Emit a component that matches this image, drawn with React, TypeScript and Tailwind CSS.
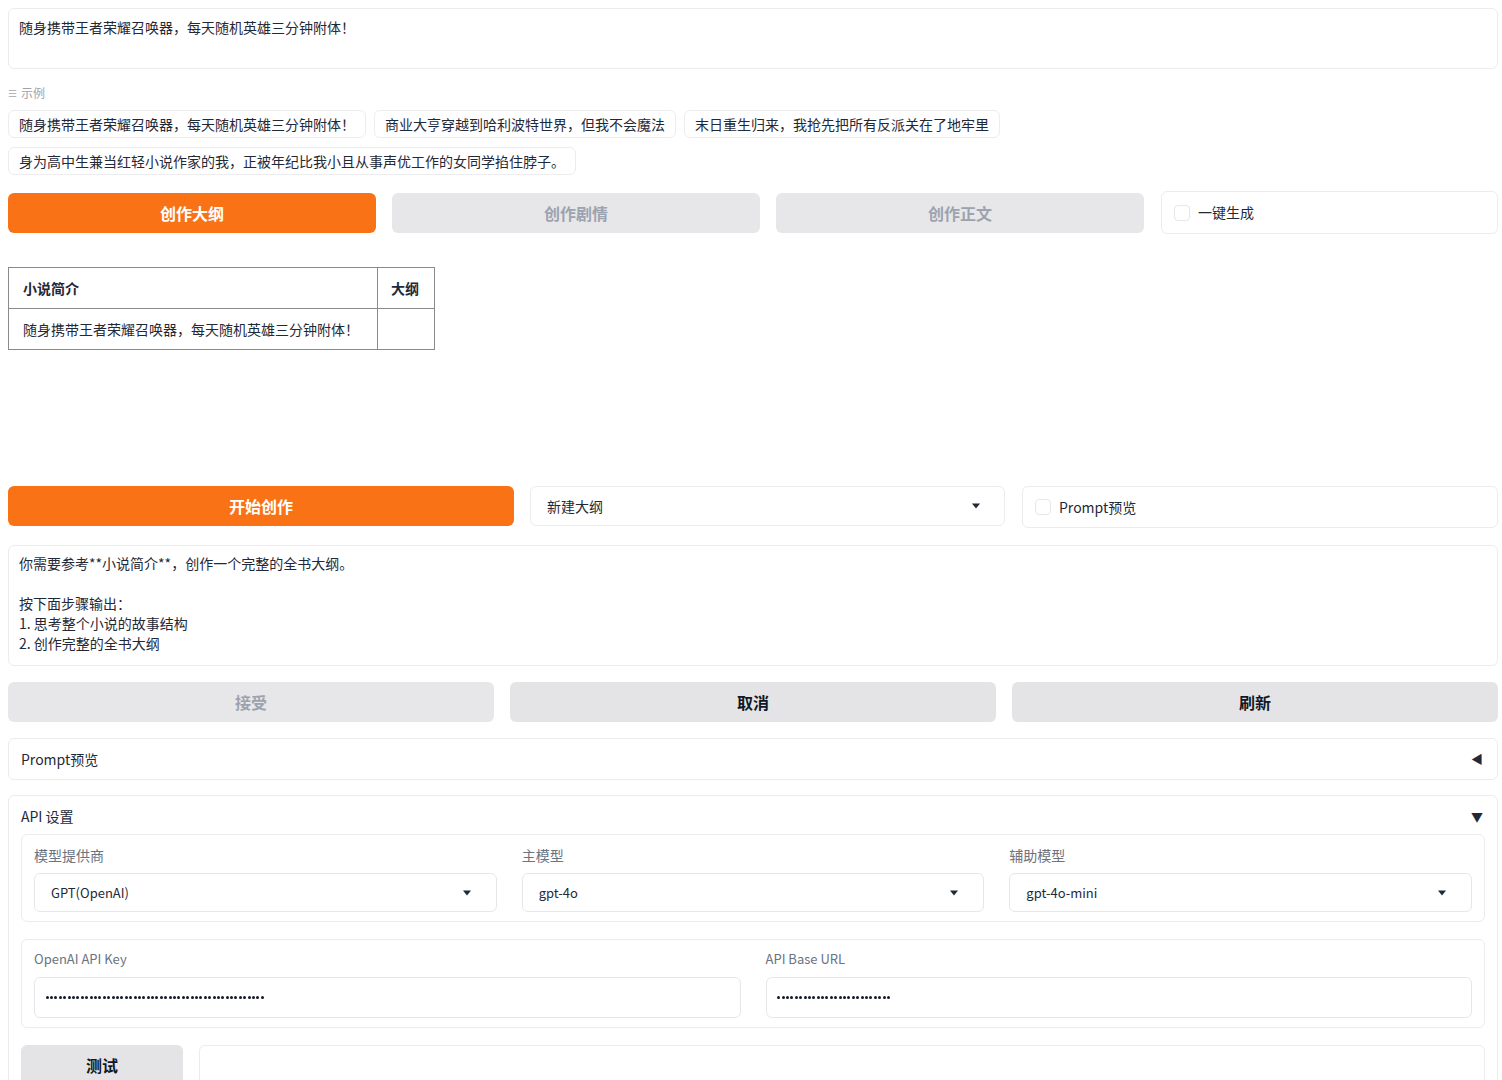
import React from 'react';

const font = { fontFamily: '"Noto Sans CJK SC", "Noto Sans", sans-serif' };

const examples = [
  '随身携带王者荣耀召唤器，每天随机英雄三分钟附体！',
  '商业大亨穿越到哈利波特世界，但我不会魔法',
  '末日重生归来，我抢先把所有反派关在了地牢里',
  '身为高中生兼当红轻小说作家的我，正被年纪比我小且从事声优工作的女同学掐住脖子。',
];

const Caret = () => (
  <svg width="10" height="6" viewBox="0 0 10 6" className="shrink-0">
    <path d="M1 0.5 L9 0.5 L5 5.5 Z" fill="#1f2937" />
  </svg>
);

const CheckBox = () => <span className="w-4 h-4 rounded-[4px] border border-[#e5e7eb] bg-white shrink-0"></span>;

const Select: React.FC<{ value: string; className?: string }> = ({ value, className }) => (
  <div className={`flex items-center justify-between h-[39px] px-4 rounded-[6px] border border-[#e5e7eb] bg-white text-[13px] text-[#1f2937] ${className || ''}`}>
    <span>{value}</span>
    <span className="mr-2"><Caret /></span>
  </div>
);

const Dots: React.FC<{ n: number }> = ({ n }) => (
  <div className="flex items-center h-[41px] px-[10px] rounded-[6px] border border-[#e5e7eb] bg-white">
    <div className="flex">
      {Array.from({ length: n }).map((_, i) => (
        <span key={i} className="w-[4.4px] h-[4.4px] flex items-center justify-center">
          <span className="w-[3px] h-[3px] rounded-full bg-[#111827]"></span>
        </span>
      ))}
    </div>
  </div>
);

export default function App() {
  return (
    <div className="min-h-screen bg-white text-[#1f2937]" style={font}>
      <div className="ml-2 w-[1490px] pt-2 flex flex-col">
        {/* story intro */}
        <div className="h-[61px] rounded-[6px] border border-[#ececee] px-[10px] pt-[8px] text-[14px] leading-5">
          随身携带王者荣耀召唤器，每天随机英雄三分钟附体！
        </div>

        {/* examples */}
        <div className="mt-[16px] flex items-center gap-1 text-[12px] text-[#9ca3af] leading-4">
          <span className="text-[10px] text-[#b4b4bb]">☰</span>
          <span>示例</span>
        </div>
        <div className="mt-[9px] flex flex-wrap gap-x-2 gap-y-[9px] w-[1000px]">
          {examples.map((e) => (
            <div key={e} className="h-[28px] px-[10px] flex items-center rounded-[6px] border border-[#ededf0] bg-white text-[14px] text-[#1f2937]">
              {e}
            </div>
          ))}
        </div>

        {/* action buttons */}
        <div className="mt-[16px] grid grid-cols-[368px_368px_368px_1fr] gap-4 items-center">
          <div className="h-[40px] rounded-[6px] bg-[#f97316] text-white font-bold text-[16px] flex items-center justify-center">创作大纲</div>
          <div className="h-[40px] rounded-[6px] bg-[#e7e7e9] text-[#9ca3af] font-bold text-[16px] flex items-center justify-center">创作剧情</div>
          <div className="h-[40px] rounded-[6px] bg-[#e7e7e9] text-[#9ca3af] font-bold text-[16px] flex items-center justify-center">创作正文</div>
          <div className="ml-[1px] h-[43px] rounded-[6px] border border-[#ececee] flex items-center gap-2 px-3 text-[14px]">
            <CheckBox />
            <span>一键生成</span>
          </div>
        </div>

        {/* table */}
        <div className="mt-[33px] h-[219px]">
          <table className="border-collapse text-[14px]">
            <thead>
              <tr className="h-[41px]">
                <th className="border border-[#8a8a8a] text-left font-bold px-[14px] w-[369px]">小说简介</th>
                <th className="border border-[#8a8a8a] text-left font-bold px-[13px] w-[57px]">大纲</th>
              </tr>
            </thead>
            <tbody>
              <tr className="h-[41px]">
                <td className="border border-[#8a8a8a] px-[14px]">随身携带王者荣耀召唤器，每天随机英雄三分钟附体！</td>
                <td className="border border-[#8a8a8a]"></td>
              </tr>
            </tbody>
          </table>
        </div>

        {/* start row */}
        <div className="grid grid-cols-[506px_475px_1fr] gap-4 items-start">
          <div className="h-[40px] rounded-[6px] bg-[#f97316] text-white font-bold text-[16px] flex items-center justify-center">开始创作</div>
          <div className="h-[40px] rounded-[6px] border border-[#ececee] flex items-center justify-between px-4 text-[14px]">
            <span>新建大纲</span>
            <span className="mr-[7px]"><Caret /></span>
          </div>
          <div className="ml-[1px] h-[42px] rounded-[6px] border border-[#ececee] flex items-center gap-2 px-3 text-[14px]">
            <CheckBox />
            <span>Prompt预览</span>
          </div>
        </div>

        {/* prompt text */}
        <div className="mt-[17px] h-[121px] rounded-[6px] border border-[#ececee] px-[10px] pt-[7px] text-[14px] leading-5">
          <div>你需要参考**小说简介**，创作一个完整的全书大纲。</div>
          <div className="h-5"></div>
          <div>按下面步骤输出：</div>
          <div>1. 思考整个小说的故事结构</div>
          <div>2. 创作完整的全书大纲</div>
        </div>

        {/* accept / cancel / refresh */}
        <div className="mt-4 grid grid-cols-3 gap-4">
          <div className="h-[40px] rounded-[6px] bg-[#e7e7e9] text-[#9ca3af] font-bold text-[16px] flex items-center justify-center">接受</div>
          <div className="h-[40px] rounded-[6px] bg-[#e4e4e7] text-[#111827] font-bold text-[16px] flex items-center justify-center">取消</div>
          <div className="h-[40px] rounded-[6px] bg-[#e4e4e7] text-[#111827] font-bold text-[16px] flex items-center justify-center">刷新</div>
        </div>

        {/* prompt accordion */}
        <div className="mt-4 h-[42px] rounded-[6px] border border-[#ececee] flex items-center justify-between pl-3 pr-[14px] text-[14px]">
          <span>Prompt预览</span>
          <span className="text-[12px] text-[#1f2937]">◀</span>
        </div>

        {/* api settings */}
        <div className="mt-[15px] rounded-[6px] border border-[#ececee] px-3 pt-[10px] pb-4">
          <div className="flex items-center justify-between h-[21px] text-[14px]">
            <span>API 设置</span>
            <span className="text-[12px] mr-[2px]">▼</span>
          </div>
          <div className="mt-[7px] rounded-[6px] border border-[#ececee] px-3 pt-[10px] pb-[9px] grid grid-cols-3 gap-x-[25px]">
            {[
              ['模型提供商', 'GPT(OpenAI)'],
              ['主模型', 'gpt-4o'],
              ['辅助模型', 'gpt-4o-mini'],
            ].map(([l, v]) => (
              <div key={l} className="flex flex-col">
                <div className="text-[14px] text-[#6b7280] leading-5">{l}</div>
                <Select value={v} className="mt-2" />
              </div>
            ))}
          </div>
          <div className="mt-[17px] rounded-[6px] border border-[#ececee] px-3 pt-[9px] pb-[9px] grid grid-cols-2 gap-x-[25px]">
            <div className="flex flex-col">
              <div className="text-[13px] text-[#6b7280] leading-5">OpenAI API Key</div>
              <div className="mt-2"><Dots n={50} /></div>
            </div>
            <div className="flex flex-col">
              <div className="text-[13px] text-[#6b7280] leading-5">API Base URL</div>
              <div className="mt-2"><Dots n={26} /></div>
            </div>
          </div>
          <div className="mt-[17px] grid grid-cols-[162px_1fr] gap-4">
            <div className="h-[40px] rounded-[6px] bg-[#e4e4e7] text-[#111827] font-bold text-[16px] flex items-center justify-center">测试</div>
            <div className="h-[60px] rounded-[6px] border border-[#ececee]"></div>
          </div>
        </div>
      </div>
    </div>
  );
}
